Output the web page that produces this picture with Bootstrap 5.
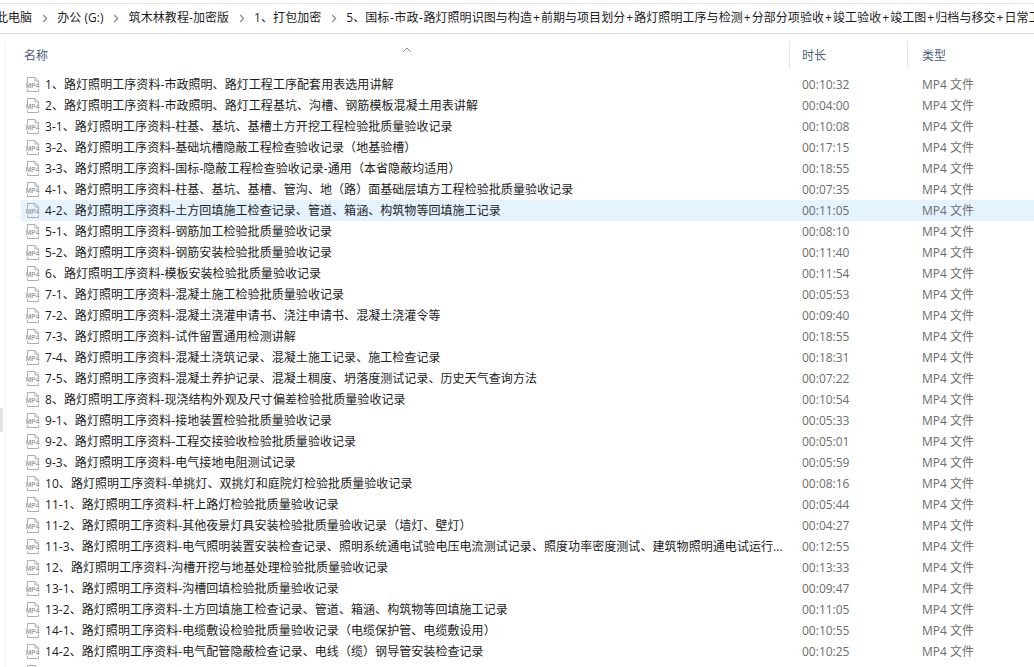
<!DOCTYPE html>
<html lang="zh-CN">
<head>
<meta charset="utf-8">
<title>文件列表</title>
<link rel="stylesheet" href="https://cdn.jsdelivr.net/npm/bootstrap@5.3.0/dist/css/bootstrap.min.css">
<style>
html,body{height:667px;overflow:hidden;background:#fff}
body{font-family:"Open Sans","Noto Sans CJK SC",sans-serif;font-size:12px;color:#1c1c1c;line-height:21px}
.fx-crumbs{height:31px;margin-top:3px;border-top:1px solid #e3e3e3;border-bottom:1px solid #dcdcdc;white-space:nowrap;overflow:hidden;line-height:28px;letter-spacing:.06px}
.fx-crumb-first{margin-left:-4px}
.fx-sep{width:25px;flex:none}
.fx-plus{padding:0 1px}
.fx-dash{padding:0 .5px}
.fx-pane{margin-left:5px;border-left:1px solid #f3f3f3;height:633px;position:relative}
.fx-head{height:27px;margin-top:7px;color:#4c607a;line-height:29px}
.fx-cname{width:783px;padding-left:18px;flex:none}
.fx-cdur{width:118px;padding-left:12px;flex:none;border-left:1px solid #e5e5e5}
.fx-ctype{flex:1;padding-left:14px;border-left:1px solid #e5e5e5}
.fx-sort{position:absolute;left:396px;top:6px}
.fx-list{margin-top:6px}
.fx-row{height:21px;white-space:nowrap}
.fx-row.fx-sel{background:#e5f3ff;margin-left:15px}
.fx-row.fx-sel .fx-n{width:768px;padding-left:4px}
.fx-n{width:783px;flex:none;padding-left:19px;display:flex;align-items:center;gap:4px;letter-spacing:.06px}
.fx-d{width:118px;flex:none;padding-left:13px;color:#6d6d6d}
.fx-t{flex:1;padding-left:15px;color:#6d6d6d}
.fx-ico{flex:none;margin-top:-1px}
#fx-mp4 text{font-family:"Liberation Sans",sans-serif;font-size:6.6px;font-weight:700;fill:#a2a2a2}
.fx-mark{position:absolute;left:0;top:408px;width:3px;height:24px;background:#e2e2e2}
</style>
</head>
<body>
<svg width="0" height="0" class="position-absolute">
<defs>
<symbol id="fx-mp4" viewBox="0 0 16 17">
<path d="M2.5 7V1.5H10L13.5 5V7M10 1.5V5H13.5M2.5 13V15.5H13.5V13" fill="none" stroke="#aeaeae" stroke-width="1"/>
<text x=".7" y="12.2">MP4</text>
</symbol>
</defs>
</svg>
<div class="fx-mark"></div>
<div class="fx-crumbs d-flex">
<span class="fx-crumb-first">此电脑</span>
<span class="fx-sep d-flex align-items-center justify-content-center"><svg width="6" height="9" viewBox="0 0 6 9"><path d="M1.2 1L4.6 4.5L1.2 8" fill="none" stroke="#8a8a8a" stroke-width="1.2"/></svg></span>
<span>办公 (G:)</span>
<span class="fx-sep d-flex align-items-center justify-content-center"><svg width="6" height="9" viewBox="0 0 6 9"><path d="M1.2 1L4.6 4.5L1.2 8" fill="none" stroke="#8a8a8a" stroke-width="1.2"/></svg></span>
<span>筑木林教程-加密版</span>
<span class="fx-sep d-flex align-items-center justify-content-center"><svg width="6" height="9" viewBox="0 0 6 9"><path d="M1.2 1L4.6 4.5L1.2 8" fill="none" stroke="#8a8a8a" stroke-width="1.2"/></svg></span>
<span>1、打包加密</span>
<span class="fx-sep d-flex align-items-center justify-content-center"><svg width="6" height="9" viewBox="0 0 6 9"><path d="M1.2 1L4.6 4.5L1.2 8" fill="none" stroke="#8a8a8a" stroke-width="1.2"/></svg></span>
<span>5、国标<span class="fx-dash">-</span>市政<span class="fx-dash">-</span>路灯照明识图与构造<span class="fx-plus">+</span>前期与项目划分<span class="fx-plus">+</span>路灯照明工序与检测<span class="fx-plus">+</span>分部分项验收<span class="fx-plus">+</span>竣工验收<span class="fx-plus">+</span>竣工图<span class="fx-plus">+</span>归档与移交<span class="fx-plus">+</span>日常工作</span>
</div>
<div class="fx-pane">
<svg class="fx-sort" width="10" height="6" viewBox="0 0 10 6"><path d="M1 5L5 1L9 5" fill="none" stroke="#8a8a8a" stroke-width="1"/></svg>
<div class="fx-head d-flex">
<div class="fx-cname">名称</div>
<div class="fx-cdur">时长</div>
<div class="fx-ctype">类型</div>
</div>
<div class="fx-list" id="fx-list"></div>
</div>
<script>
var rows=[
["1、路灯照明工序资料-市政照明、路灯工程工序配套用表选用讲解","00:10:32"],
["2、路灯照明工序资料-市政照明、路灯工程基坑、沟槽、钢筋模板混凝土用表讲解","00:04:00"],
["3-1、路灯照明工序资料-柱基、基坑、基槽土方开挖工程检验批质量验收记录","00:10:08"],
["3-2、路灯照明工序资料-基础坑槽隐蔽工程检查验收记录（地基验槽）","00:17:15"],
["3-3、路灯照明工序资料-国标-隐蔽工程检查验收记录-通用（本省隐蔽均适用）","00:18:55"],
["4-1、路灯照明工序资料-柱基、基坑、基槽、管沟、地（路）面基础层填方工程检验批质量验收记录","00:07:35"],
["4-2、路灯照明工序资料-土方回填施工检查记录、管道、箱涵、构筑物等回填施工记录","00:11:05"],
["5-1、路灯照明工序资料-钢筋加工检验批质量验收记录","00:08:10"],
["5-2、路灯照明工序资料-钢筋安装检验批质量验收记录","00:11:40"],
["6、路灯照明工序资料-模板安装检验批质量验收记录","00:11:54"],
["7-1、路灯照明工序资料-混凝土施工检验批质量验收记录","00:05:53"],
["7-2、路灯照明工序资料-混凝土浇灌申请书、浇注申请书、混凝土浇灌令等","00:09:40"],
["7-3、路灯照明工序资料-试件留置通用检测讲解","00:18:55"],
["7-4、路灯照明工序资料-混凝土浇筑记录、混凝土施工记录、施工检查记录","00:18:31"],
["7-5、路灯照明工序资料-混凝土养护记录、混凝土稠度、坍落度测试记录、历史天气查询方法","00:07:22"],
["8、路灯照明工序资料-现浇结构外观及尺寸偏差检验批质量验收记录","00:10:54"],
["9-1、路灯照明工序资料-接地装置检验批质量验收记录","00:05:33"],
["9-2、路灯照明工序资料-工程交接验收检验批质量验收记录","00:05:01"],
["9-3、路灯照明工序资料-电气接地电阻测试记录","00:05:59"],
["10、路灯照明工序资料-单挑灯、双挑灯和庭院灯检验批质量验收记录","00:08:16"],
["11-1、路灯照明工序资料-杆上路灯检验批质量验收记录","00:05:44"],
["11-2、路灯照明工序资料-其他夜景灯具安装检验批质量验收记录（墙灯、壁灯）","00:04:27"],
["11-3、路灯照明工序资料-电气照明装置安装检查记录、照明系统通电试验电压电流测试记录、照度功率密度测试、建筑物照明通电试运行...","00:12:55"],
["12、路灯照明工序资料-沟槽开挖与地基处理检验批质量验收记录","00:13:33"],
["13-1、路灯照明工序资料-沟槽回填检验批质量验收记录","00:09:47"],
["13-2、路灯照明工序资料-土方回填施工检查记录、管道、箱涵、构筑物等回填施工记录","00:11:05"],
["14-1、路灯照明工序资料-电缆敷设检验批质量验收记录（电缆保护管、电缆敷设用）","00:10:55"],
["14-2、路灯照明工序资料-电气配管隐蔽检查记录、电线（缆）钢导管安装检查记录","00:10:25"],
["",""]
];
var box=document.getElementById("fx-list");
rows.forEach(function(r,i){
  var el=document.createElement("div");
  el.className="fx-row d-flex"+(i===6?" fx-sel":"");
  el.innerHTML='<div class="fx-n"><svg class="fx-ico" width="16" height="17"><use href="#fx-mp4"/></svg><span>'+r[0]+'</span></div><div class="fx-d">'+r[1]+'</div><div class="fx-t">'+(r[1]?'MP4 文件':'')+'</div>';
  box.appendChild(el);
});
</script>
<script src="https://cdn.jsdelivr.net/npm/bootstrap@5.3.0/dist/js/bootstrap.bundle.min.js"></script>
</body>
</html>
